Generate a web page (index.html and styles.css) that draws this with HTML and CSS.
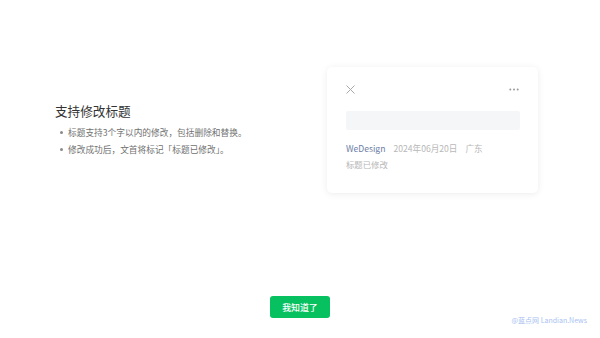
FILE: index.html
```html
<!DOCTYPE html>
<html lang="zh-CN">
<head>
<meta charset="utf-8">
<link rel="stylesheet" href="styles.css">
</head>
<body>
<div class="page">
  <div class="main">
    <div class="intro">
      <h2 class="title">支持修改标题</h2>
      <ul class="points">
        <li>标题支持3个字以内的修改，包括删除和替换。</li>
        <li>修改成功后，文首将标记「标题已修改」。</li>
      </ul>
    </div>
    <div class="card">
      <div class="card-head">
        <svg class="icon-close" width="9" height="9" viewBox="0 0 9 9"><path d="M0.5 0.5 L8.5 8.5 M8.5 0.5 L0.5 8.5" stroke="#a8a8a8" stroke-width="1" fill="none"/></svg>
        <svg class="icon-more" width="10" height="3" viewBox="0 0 10 3"><circle cx="1.3" cy="1.5" r="1" fill="#9a9a9a"/><circle cx="5" cy="1.5" r="1" fill="#9a9a9a"/><circle cx="8.7" cy="1.5" r="1" fill="#9a9a9a"/></svg>
      </div>
      <div class="title-bar"></div>
      <div class="meta">
        <span class="author">WeDesign</span>
        <span>2024年06月20日</span>
        <span>广东</span>
      </div>
      <div class="edited">标题已修改</div>
    </div>
  </div>
  <div class="footer">
    <button class="btn-ok">我知道了</button>
  </div>
  <div class="watermark">@蓝点网 Landian.News</div>
</div>
</body>
</html>
```
FILE: styles.css
```css
* { box-sizing: border-box; }
html, body { margin: 0; padding: 0; background: #ffffff; }
body { font-family: "Noto Sans CJK SC", "Noto Sans", sans-serif; }
.page {
  position: relative;
  width: 600px;
  height: 338px;
  display: flex;
  flex-direction: column;
  overflow: hidden;
}
.main {
  display: flex;
  align-items: flex-start;
  padding-top: 67px;
  padding-left: 55px;
}
.intro {
  width: 272px;
  margin-top: 35px;
}
.title {
  margin: 0 0 4px 0;
  font-size: 12.6px;
  line-height: 18px;
  font-weight: 400;
  color: #333333;
}
.points {
  list-style: none;
  margin: 0;
  padding: 0;
}
.points li {
  position: relative;
  padding-left: 13px;
  font-size: 8.7px;
  line-height: 17px;
  color: #707070;
  white-space: nowrap;
}
.points li::before {
  content: "";
  position: absolute;
  left: 5px;
  top: 7px;
  width: 3px;
  height: 3px;
  border-radius: 50%;
  background: #8a8a8a;
}
.card {
  width: 211px;
  padding: 17px 18px 21px 19px;
  border-radius: 5px;
  background: #fff;
  box-shadow: 0 1px 7px rgba(0, 0, 0, 0.08);
}
.card-head {
  display: flex;
  justify-content: space-between;
  align-items: center;
  height: 10px;
}
.icon-close { display: block; }
.icon-more { display: block; margin-right: 1px; }
.title-bar {
  margin-top: 17px;
  height: 19px;
  border-radius: 2px;
  background: #f5f6f7;
}
.meta {
  margin-top: 9.5px;
  display: flex;
  gap: 8px;
  font-size: 8.6px;
  line-height: 16px;
  color: #b8b8b8;
  white-space: nowrap;
}
.author { color: #6b7ea6; }
.edited {
  font-size: 8.4px;
  line-height: 16px;
  color: #b8b8b8;
}
.footer {
  margin-top: auto;
  padding-bottom: 20px;
  display: flex;
  justify-content: center;
}
.btn-ok {
  width: 60px;
  height: 22px;
  border: none;
  border-radius: 3px;
  background: #07c160;
  color: #fff;
  font-family: "Noto Sans CJK SC", sans-serif;
  font-size: 8.9px;
  font-weight: 500;
  padding: 0;
}
.watermark {
  position: absolute;
  right: 13px;
  bottom: 12px;
  font-size: 7px;
  line-height: 12px;
  color: #a9bff2;
  white-space: nowrap;
}
```
